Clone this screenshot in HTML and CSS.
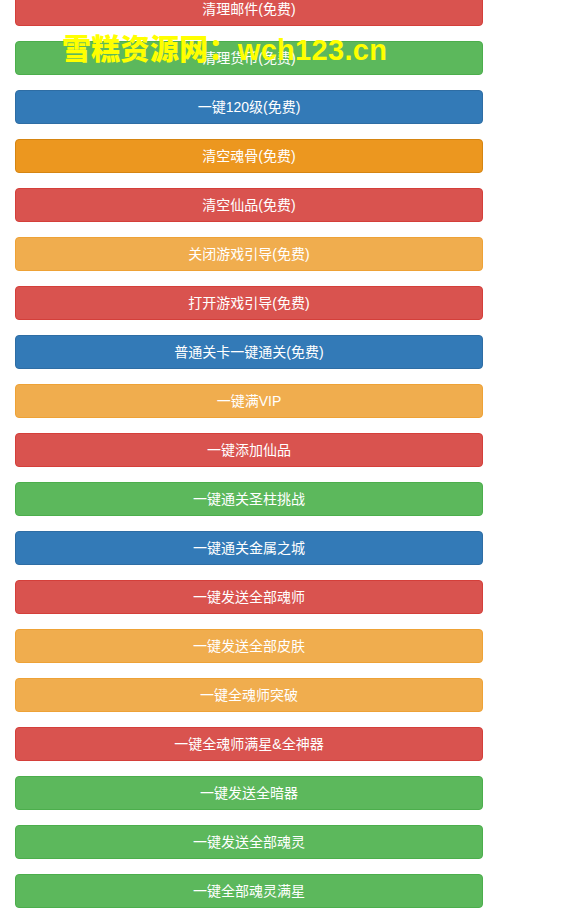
FILE: index.html
```html
<!doctype html>
<html lang="zh-CN">
    <head>
        <meta charset="UTF-8" />
        <meta name="viewport" content="width=device-width, initial-scale=1.0" />
        <title>GM工具</title>
        <link rel="stylesheet" href="styles.css">
    </head>
    <body>
        <div class="watermark">雪糕资源网：wch123.cn</div>
        <div class="container">
            <button class="btn btn-danger">清理邮件(免费)</button>
            <button class="btn btn-success">清理货币(免费)</button>
            <button class="btn btn-primary">一键120级(免费)</button>
            <button class="btn btn-warning active">清空魂骨(免费)</button>
            <button class="btn btn-danger">清空仙品(免费)</button>
            <button class="btn btn-warning">关闭游戏引导(免费)</button>
            <button class="btn btn-danger">打开游戏引导(免费)</button>
            <button class="btn btn-primary">普通关卡一键通关(免费)</button>
            <button class="btn btn-warning">一键满VIP</button>
            <button class="btn btn-danger">一键添加仙品</button>
            <button class="btn btn-success">一键通关圣柱挑战</button>
            <button class="btn btn-primary">一键通关金属之城</button>
            <button class="btn btn-danger">一键发送全部魂师</button>
            <button class="btn btn-warning">一键发送全部皮肤</button>
            <button class="btn btn-warning">一键全魂师突破</button>
            <button class="btn btn-danger">一键全魂师满星&amp;全神器</button>
            <button class="btn btn-success">一键发送全暗器</button>
            <button class="btn btn-success">一键发送全部魂灵</button>
            <button class="btn btn-success">一键全部魂灵满星</button>
        </div>
    </body>
</html>
```

FILE: styles.css
```css
body {
    margin: 0;
    background: #fff;
    font-family: "Liberation Sans", "Noto Sans CJK SC", sans-serif;
}
.container {
    width: 468px;
    margin: -8px 0 0 15px;
    display: flex;
    flex-direction: column;
    gap: 15px;
}
.btn {
    display: block;
    width: 100%;
    height: 34px;
    padding: 6px 12px;
    font-family: inherit;
    font-size: 14px;
    line-height: 20px;
    color: #fff;
    border: 1px solid transparent;
    border-radius: 4px;
    text-align: center;
}
.btn-danger {
    background: #d9534f;
    border-color: #d43f3a;
}
.btn-success {
    background: #5cb85c;
    border-color: #4cae4c;
}
.btn-primary {
    background: #337ab7;
    border-color: #2e6da4;
}
.btn-warning {
    background: #f0ad4e;
    border-color: #eea236;
}
.btn-warning.active {
    background: #ec971f;
    border-color: #d58512;
}
.watermark {
    position: absolute;
    left: 62px;
    top: 33px;
    color: #ffff00;
    font-family: "Liberation Sans", "Noto Sans CJK SC", sans-serif;
    font-size: 29px;
    line-height: 34px;
    letter-spacing: 0.3px;
    font-weight: 900;
    white-space: nowrap;
    z-index: 2;
}
```
